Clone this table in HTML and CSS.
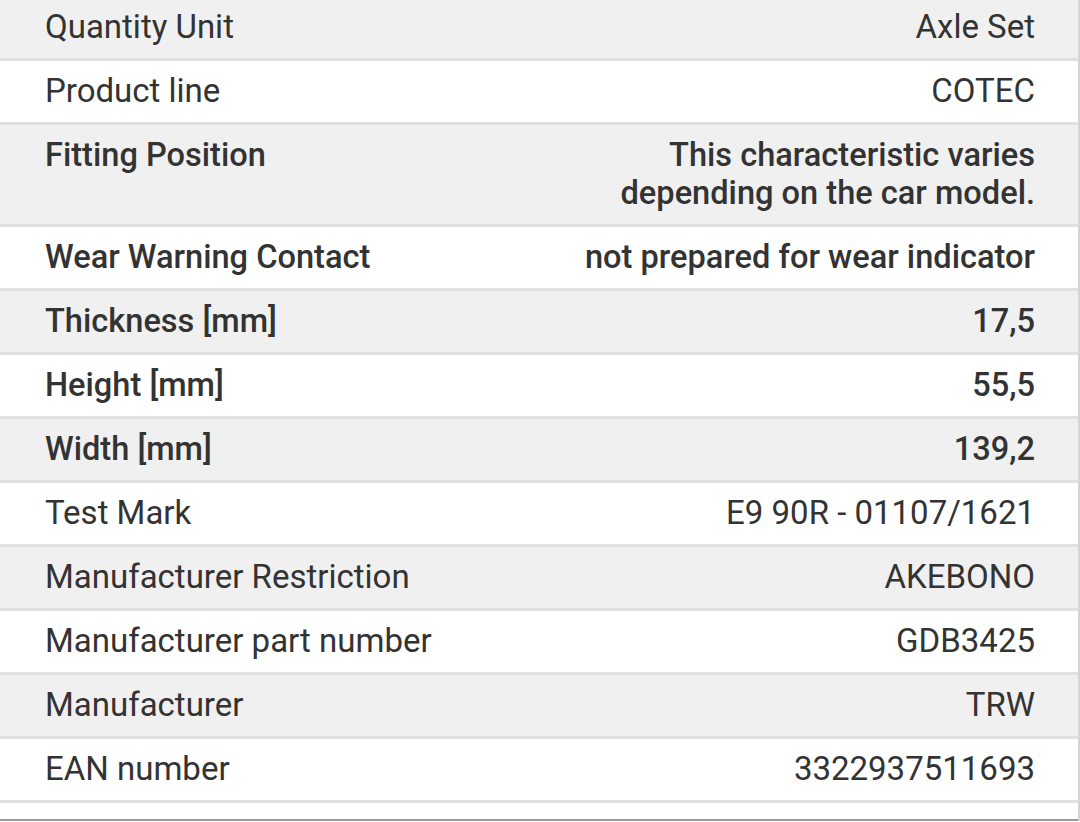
FILE: index.html
```html
<!DOCTYPE html>
<html>
<head>
<meta charset="utf-8">
<link rel="stylesheet" href="styles.css">
</head>
<body>
<div class="specs">
  <div class="row alt first"><div class="label">Quantity Unit</div><div class="value">Axle Set</div></div>
  <div class="row"><div class="label">Product line</div><div class="value">COTEC</div></div>
  <div class="row alt strong"><div class="label">Fitting Position</div><div class="value">This characteristic varies<br>depending on the car model.</div></div>
  <div class="row strong"><div class="label">Wear Warning Contact</div><div class="value">not prepared for wear indicator</div></div>
  <div class="row alt strong"><div class="label">Thickness [mm]</div><div class="value">17,5</div></div>
  <div class="row strong"><div class="label">Height [mm]</div><div class="value">55,5</div></div>
  <div class="row alt strong"><div class="label">Width [mm]</div><div class="value">139,2</div></div>
  <div class="row"><div class="label">Test Mark</div><div class="value">E9 90R - 01107/1621</div></div>
  <div class="row alt"><div class="label">Manufacturer Restriction</div><div class="value">AKEBONO</div></div>
  <div class="row"><div class="label">Manufacturer part number</div><div class="value">GDB3425</div></div>
  <div class="row alt"><div class="label">Manufacturer</div><div class="value">TRW</div></div>
  <div class="row"><div class="label">EAN number</div><div class="value">3322937511693</div></div>
  <div class="tail"></div>
</div>
</body>
</html>
```
FILE: styles.css
```css
html, body {
  margin: 0;
  padding: 0;
  background: #ffffff;
}
body {
  font-family: Roboto, "Liberation Sans", sans-serif;
  color: #333333;
  width: 1080px;
  height: 822px;
  overflow: hidden;
}
.specs {
  width: 1078px;
  border-right: 2px solid #d4d4d4;
  display: flex;
  flex-direction: column;
}
.row {
  display: flex;
  justify-content: space-between;
  align-items: flex-start;
  padding: 11px 43px 12px 45px;
  font-size: 33px;
  line-height: 38px;
  background: #ffffff;
  border-bottom: 3px solid #e0e0e0;
}
.row.first {
  padding-top: 8px;
}
.row.alt {
  background: #f0f0f0;
}
.row.strong {
  font-weight: 500;
  font-size: 32.6px;
}
.label {
  flex: 0 0 auto;
}
.value {
  text-align: right;
}
.tail {
  height: 16px;
  border-bottom: 2px solid #9a9a9a;
}
```
